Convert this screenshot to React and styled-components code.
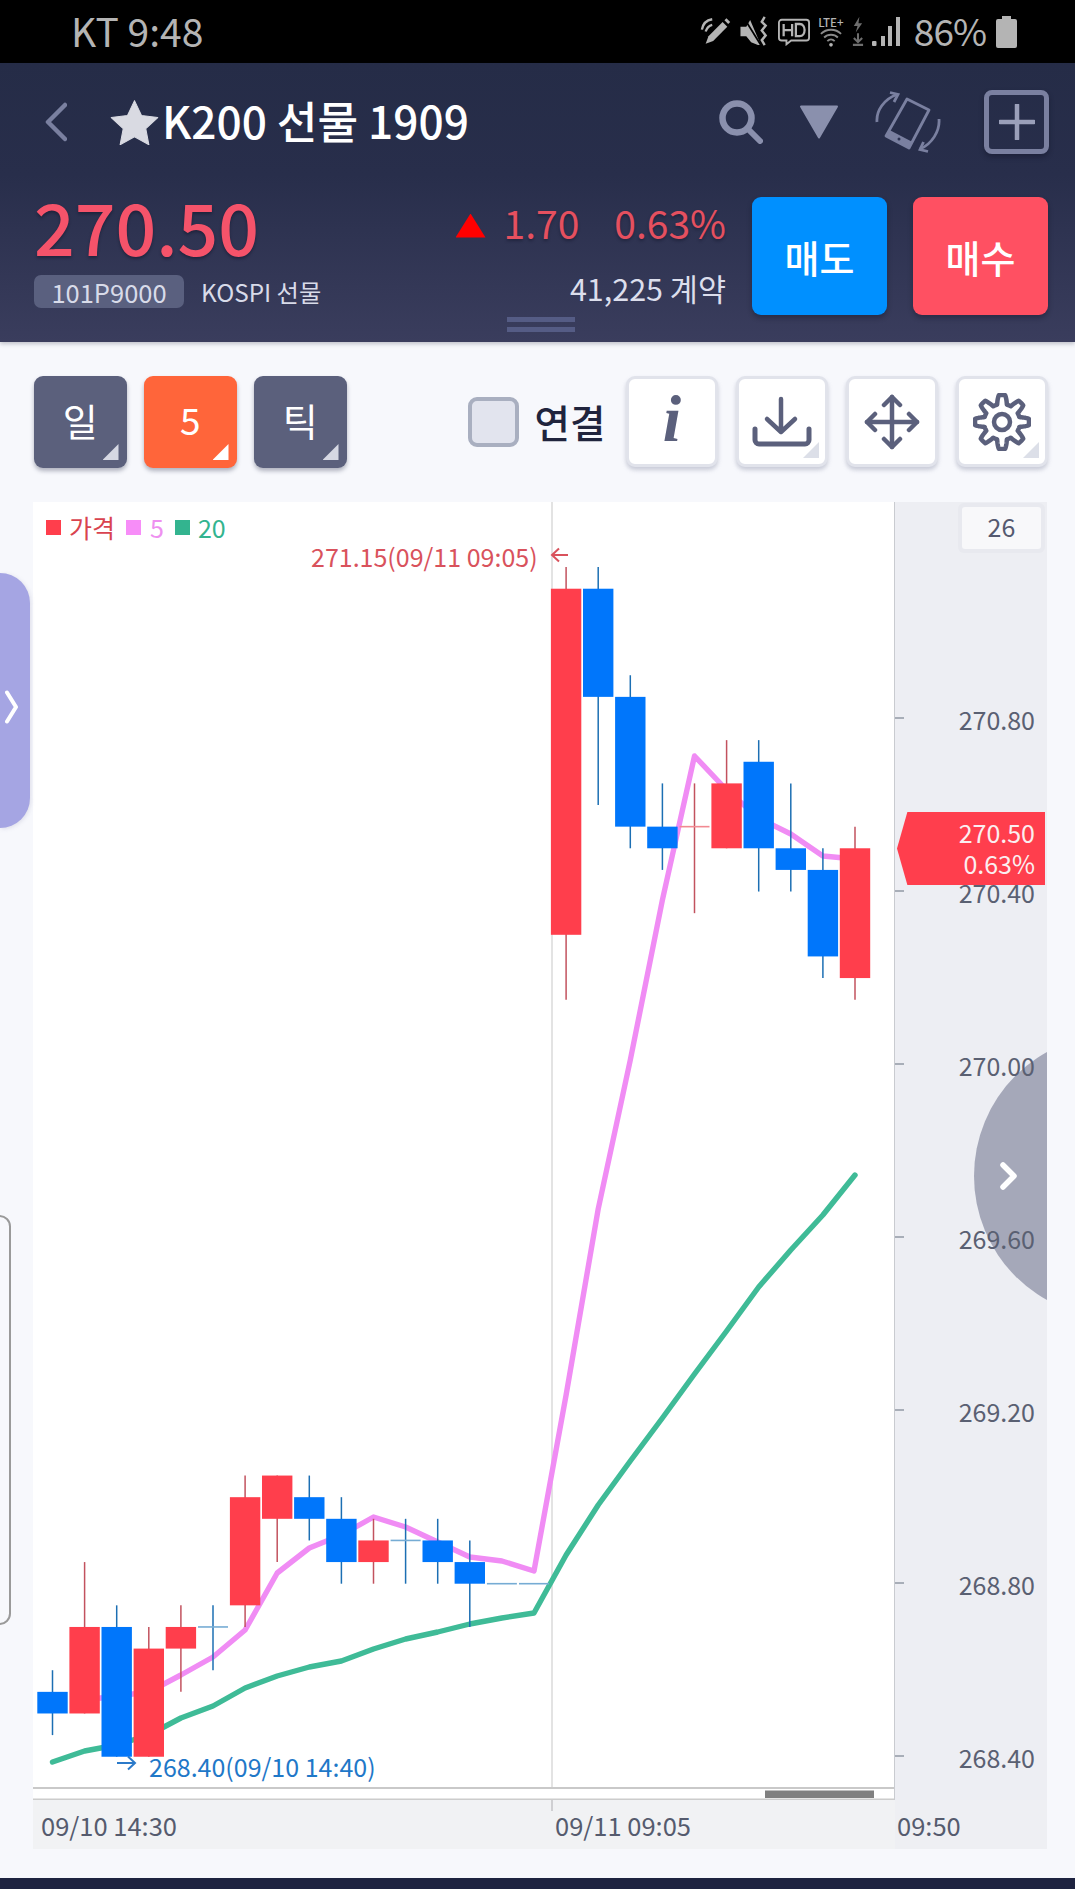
import React from 'react';
import styled, { createGlobalStyle } from 'styled-components';

const Global = createGlobalStyle`
  html, body { margin: 0; padding: 0; background: #f7f8fc; }
  body { font-family: "Noto Sans CJK KR", "Noto Sans", sans-serif; }
  * { box-sizing: border-box; }
`;

const Page = styled.div`
  position: relative;
  width: 1075px;
  height: 1889px;
  overflow: hidden;
  background: #f7f8fc;
  display: flex;
  flex-direction: column;
`;

/* status bar */
const StatusBar = styled.div`
  height: 63px;
  background: #000;
  color: #b4b4b4;
  display: flex;
  align-items: center;
  padding: 0 58px 0 71px;
  font-size: 39px;
  flex: none;
`;
const StatusTime = styled.span`
  line-height: 1;
  margin-top: -2px;
`;
const StatusIcons = styled.div`
  margin-left: auto;
  display: flex;
  align-items: center;
  gap: 8px;
`;
const Percent = styled.span`
  font-size: 37px;
  letter-spacing: -1px;
  line-height: 1;
  margin: -2px 2px 0 6px;
`;
const LteStack = styled.div`
  width: 26px;
  display: flex;
  flex-direction: column;
  align-items: center;
`;
const LteText = styled.span`
  font-size: 11.5px;
  line-height: 12px;
  font-weight: 500;
  color: #b4b4b4;
  white-space: nowrap;
`;

/* header */
const Header = styled.header`
  position: relative;
  flex: none;
  height: 279px;
  background: linear-gradient(180deg, #252c47 0%, #282e4b 40%, #3a3d5d 100%);
  box-shadow: 0 2px 4px rgba(30, 35, 60, 0.25);
  z-index: 2;
`;
const TitleRow = styled.div`
  height: 117px;
  display: flex;
  align-items: center;
  padding: 0 26px 0 45px;
`;
const Title = styled.h1`
  margin: -3px 0 0 3px;
  font-size: 44.2px;
  font-weight: 500;
  line-height: 1;
  color: #fff;
  white-space: nowrap;
`;
const StarMark = styled.svg`
  margin-left: 43px;
  flex: none;
`;
const TopActions = styled.div`
  margin-left: auto;
  display: flex;
  align-items: center;
  gap: 36px;
`;
const PlusBox = styled.div`
  width: 65px;
  height: 64px;
  margin-left: 7px;
  border: 5px solid #7a80a0;
  border-radius: 8px;
  display: flex;
  align-items: center;
  justify-content: center;
  box-shadow: 0 3px 5px rgba(15, 18, 35, 0.4);
`;
const PriceRow = styled.div`
  display: flex;
  padding: 17px 27px 0 34px;
  align-items: flex-start;
`;
const PriceColumn = styled.div`
  display: flex;
  flex-direction: column;
  align-items: flex-start;
`;
const BigPrice = styled.div`
  font-size: 71.5px;
  line-height: 73px;
  font-weight: 500;
  color: #f5536a;
  margin: -8px 0 0 0;
  text-shadow: 0 2px 3px rgba(10, 12, 30, 0.4);
`;
const CodeRow = styled.div`
  display: flex;
  align-items: center;
  gap: 17px;
  margin-top: 13px;
`;
const CodeBadge = styled.span`
  width: 150px;
  height: 33px;
  background: #5a607f;
  border-radius: 7px;
  color: #d8dbe9;
  font-size: 25.5px;
  line-height: 33px;
  text-align: center;
`;
const CodeName = styled.span`
  color: #d8dbe9;
  font-size: 24.3px;
  line-height: 33px;
`;
const ChangeColumn = styled.div`
  margin-left: auto;
  display: flex;
  flex-direction: column;
  align-items: flex-end;
`;
const ChangeLine = styled.div`
  display: flex;
  align-items: center;
  font-size: 39px;
  line-height: 50px;
  color: #e5505f;
  text-shadow: 0 2px 3px rgba(10, 12, 30, 0.35);
`;
const UpTriangle = styled.i`
  display: block;
  width: 30px;
  height: 24px;
  margin: 7px 18px 0 0;
  background: #f00;
  clip-path: polygon(50% 0, 100% 100%, 0 100%);
`;
const ChangeGap = styled.span`
  margin-left: 35px;
`;
const Volume = styled.div`
  color: #dcdeec;
  font-size: 30.5px;
  line-height: 40px;
  margin-top: 21px;
`;
const TradeButtons = styled.div`
  display: flex;
  gap: 26px;
  margin-left: 26px;
`;
const TradeButton = styled.button`
  width: 135px;
  height: 118px;
  border: 0;
  border-radius: 9px;
  background: ${(p) => (p.$sell ? '#0090ff' : '#ff5062')};
  color: #fff;
  font-family: inherit;
  font-size: 38px;
  font-weight: 500;
  padding: 0;
  box-shadow: 0 3px 5px rgba(15, 18, 35, 0.35);
`;
const Grip = styled.div`
  position: absolute;
  left: 507px;
  bottom: 10px;
  width: 68px;
  height: 15px;
  border-top: 5px solid #555c85;
  border-bottom: 5px solid #555c85;
`;

/* toolbar */
const Toolbar = styled.div`
  flex: none;
  height: 160px;
  display: flex;
  align-items: flex-start;
  padding: 34px 27px 0 34px;
`;
const IntervalGroup = styled.div`
  display: flex;
  gap: 17.5px;
`;
const Corner = styled.i`
  position: absolute;
  right: ${(p) => p.$inset}px;
  bottom: ${(p) => p.$inset}px;
  width: 16px;
  height: 16px;
  background: ${(p) => p.$color};
  clip-path: polygon(100% 0, 100% 100%, 0 100%);
`;
const IntervalButton = styled.div`
  position: relative;
  width: 92.5px;
  height: 92px;
  border-radius: 9px;
  background: ${(p) => (p.$active ? '#ff653a' : '#5b607c')};
  color: #fff;
  font-size: ${(p) => (p.$active ? 37 : 38)}px;
  line-height: 87px;
  text-align: center;
  box-shadow: 0 3px 4px rgba(70, 75, 100, 0.4);
`;
const LinkCheck = styled.div`
  display: flex;
  align-items: center;
  height: 92px;
  margin-left: 121px;
  gap: 16px;
`;
const CheckBox = styled.div`
  width: 51px;
  height: 50px;
  border: 4px solid #a9afc0;
  border-radius: 9px;
  background: #e2e4ee;
`;
const CheckLabel = styled.span`
  font-size: 38.5px;
  font-weight: 500;
  color: #20243d;
  margin-top: -3px;
`;
const ToolGroup = styled.div`
  margin-left: auto;
  display: flex;
  gap: 18px;
`;
const ToolButton = styled.div`
  position: relative;
  width: 92px;
  height: 91px;
  background: #fff;
  border: 3px solid #e1e3eb;
  border-radius: 9px;
  display: flex;
  align-items: center;
  justify-content: center;
  box-shadow: 0 3px 4px rgba(130, 135, 160, 0.4);
`;
const InfoGlyph = styled.span`
  font-family: "Liberation Serif", serif;
  font-style: italic;
  font-weight: 700;
  font-size: 66px;
  line-height: 1;
  color: #5b607c;
  margin-top: -6px;
`;

/* chart */
const ChartGrid = styled.div`
  flex: none;
  width: 1014px;
  margin-left: 33px;
  display: grid;
  grid-template-columns: 862px 152px;
  grid-template-rows: 1298px 49px;
`;
const Plot = styled.div`
  position: relative;
  background: #fff;
`;
const PlotSvg = styled.svg`
  display: block;
`;
const Legend = styled.div`
  position: absolute;
  left: 13px;
  top: 7px;
  display: flex;
  align-items: center;
  font-size: 25px;
  line-height: 36px;
`;
const LegendSwatch = styled.i`
  width: 15px;
  height: 15px;
  margin: 0 ${(p) => p.$gap}px 0 ${(p) => p.$lead}px;
  background: ${(p) => p.$color};
`;
const LegendText = styled.span`
  color: ${(p) => p.$color};
`;
const Extreme = styled.div`
  position: absolute;
  left: ${(p) => p.$left}px;
  top: ${(p) => p.$top}px;
  font-size: 25px;
  line-height: 30px;
  white-space: nowrap;
  color: ${(p) => p.$color};
`;
const RightAxis = styled.div`
  position: relative;
  background: #edeef3;
  overflow: hidden;
`;
const CountTag = styled.div`
  position: absolute;
  top: 1px;
  right: 2px;
  width: 87px;
  height: 50px;
  background: #e8e9ef;
  border-radius: 6px;
  padding: 4px;
`;
const CountValue = styled.div`
  height: 42px;
  background: #f8f8fa;
  border-radius: 3px;
  color: #555a70;
  font-size: 25px;
  line-height: 38px;
  text-align: center;
`;
const Circle = styled.div`
  position: absolute;
  left: 79px;
  top: 532px;
  width: 284px;
  height: 284px;
  border-radius: 50%;
  background: #a5a8b9;
`;
const CircleArrow = styled.svg`
  position: absolute;
  left: 26px;
  top: 128px;
`;
const Tick = styled.i`
  position: absolute;
  left: 0;
  width: 9px;
  height: 2px;
  background: #a8aeb8;
`;
const PriceLabel = styled.span`
  position: absolute;
  right: 12px;
  font-size: 25px;
  line-height: 30px;
  color: #5a6072;
`;
const PriceTag = styled.div`
  position: absolute;
  left: 2px;
  top: 310px;
  width: 148px;
  height: 73px;
  background: #ff3e4d;
  clip-path: polygon(0 50%, 7% 0, 100% 0, 100% 100%, 7% 100%);
  padding: 5px 10px 0 0;
  color: #fbeef0;
  font-size: 25px;
  line-height: 31px;
  text-align: right;
`;
const TimeAxis = styled.div`
  position: relative;
  background: #f1f2f4;
  display: flex;
  align-items: center;
  font-size: 25.5px;
  color: #555b6e;
  padding-left: 8px;
`;
const TimeLabel = styled.span`
  width: ${(p) => p.$width}px;
  margin-top: -1px;
`;
const TimeMark = styled.i`
  position: absolute;
  left: 518px;
  top: 0;
  width: 2px;
  height: 11px;
  background: #cfcfd2;
`;
const CornerTime = styled(RightAxis)`
  display: flex;
  align-items: center;
  font-size: 25.5px;
  color: #555b6e;
  padding-left: 2px;
  background: #eeeff3;
`;
const BottomBar = styled.div`
  position: absolute;
  left: 0;
  right: 0;
  bottom: 0;
  height: 11px;
  background: #1e2340;
`;

/* side overlays */
const SideTab = styled.div`
  position: absolute;
  left: 0;
  top: 573px;
  width: 30px;
  height: 255px;
  background: #a5a5e3;
  border-radius: 0 30px 30px 0;
  display: flex;
  align-items: center;
  justify-content: flex-start;
  padding: 12px 0 0 5px;
  box-shadow: 1px 1px 4px rgba(120, 120, 160, 0.2);
`;
const SideFrame = styled.div`
  position: absolute;
  left: -12px;
  top: 1215px;
  width: 23px;
  height: 410px;
  border: 2px solid #9a9a9a;
  border-radius: 12px;
`;

const yOf = (p) => 1583.7 + (268.8 - p) * 432.6;
const xOf = (i) => 52.5 + 32.1 * i;

const CANDLES = [
  ['b', 268.6, 268.55, 268.5, 268.45],
  ['r', 268.85, 268.7, 268.5, 268.5],
  ['b', 268.75, 268.7, 268.4, 268.4],
  ['r', 268.7, 268.65, 268.4, 268.4],
  ['r', 268.75, 268.7, 268.65, 268.55],
  ['b', 268.75, 268.7, 268.7, 268.6],
  ['r', 269.05, 269.0, 268.75, 268.7],
  ['r', 269.05, 269.05, 268.95, 268.85],
  ['b', 269.05, 269.0, 268.95, 268.9],
  ['b', 269.0, 268.95, 268.85, 268.8],
  ['r', 268.95, 268.9, 268.85, 268.8],
  ['b', 268.95, 268.9, 268.9, 268.8],
  ['b', 268.95, 268.9, 268.85, 268.8],
  ['b', 268.9, 268.85, 268.8, 268.7],
  ['b', 268.8, 268.8, 268.8, 268.8],
  ['b', 268.8, 268.8, 268.8, 268.8],
  ['r', 271.15, 271.1, 270.3, 270.15],
  ['b', 271.15, 271.1, 270.85, 270.6],
  ['b', 270.9, 270.85, 270.55, 270.5],
  ['b', 270.65, 270.55, 270.5, 270.45],
  ['r', 270.65, 270.55, 270.55, 270.35],
  ['r', 270.75, 270.65, 270.5, 270.5],
  ['b', 270.75, 270.7, 270.5, 270.4],
  ['b', 270.65, 270.5, 270.45, 270.4],
  ['b', 270.5, 270.45, 270.25, 270.2],
  ['r', 270.55, 270.5, 270.2, 270.15],
];

const MA5 = [
  [1, 1700], [2, 1696], [3, 1692], [4, 1675], [5, 1657], [6, 1630], [7, 1573], [8, 1548],
  [9, 1535], [10, 1517], [11, 1527], [12, 1542], [13, 1557], [14, 1561], [15, 1571],
  [16, 1395], [17, 1209], [18, 1060], [19, 900], [20, 756], [21, 790], [22, 818],
  [23, 834], [24, 856], [25, 859],
];
const MA20 = [
  [0, 1762], [1, 1751], [2, 1745], [3, 1735], [4, 1718], [5, 1706], [6, 1688], [7, 1676],
  [8, 1667], [9, 1661], [10, 1649], [11, 1639], [12, 1632], [13, 1624], [14, 1618], [15, 1613],
  [16, 1555], [17, 1505], [18, 1461], [19, 1418], [20, 1374], [21, 1331], [22, 1287],
  [23, 1250], [24, 1215], [25, 1175],
];
const linePoints = (rows) => rows.map(([i, y]) => `${xOf(i).toFixed(1)},${y}`).join(' ');

const PRICE_TICKS = ['270.80', '270.40', '270.00', '269.60', '269.20', '268.80', '268.40'];

const gearPath = (() => {
  const pts = [];
  for (let s = 0; s < 320; s += 1) {
    const t = (s / 320) * Math.PI * 2;
    const c = Math.max(-1, Math.min(1, 1.7 * Math.cos(8 * t + Math.PI * 4)));
    const r = 22.5 + 4.5 * c;
    pts.push(`${(29 + r * Math.sin(t)).toFixed(2)} ${(29 - r * Math.cos(t)).toFixed(2)}`);
  }
  return `M${pts.join('L')}Z`;
})();

function Candle({ data, index }) {
  const [kind, high, top, bottom, low] = data;
  const x = xOf(index);
  const wick = kind === 'r' ? '#c2525e' : '#1c6fb3';
  const body = kind === 'r' ? '#ff3e4c' : '#0076fb';
  const flat = top === bottom;
  return (
    <g>
      {high !== low && <line x1={x} x2={x} y1={yOf(high)} y2={yOf(low)} stroke={wick} strokeWidth="1.5" />}
      {flat ? (
        <line
          x1={x - 15}
          x2={x + 15}
          y1={yOf(top)}
          y2={yOf(top)}
          stroke={kind === 'r' ? '#f28a92' : '#76acd4'}
          strokeWidth="1.6"
        />
      ) : (
        <rect x={x - 15.2} y={yOf(top)} width="30.4" height={yOf(bottom) - yOf(top)} fill={body} />
      )}
    </g>
  );
}

function ChartDrawing() {
  return (
    <PlotSvg width="862" height="1298" viewBox="33 502 862 1298">
      <line x1="552" x2="552" y1="502" y2="1788" stroke="#dadada" strokeWidth="1.5" />
      <polyline points={linePoints(MA5)} fill="none" stroke="#f08cf4" strokeWidth="5.4" strokeLinejoin="round" />
      <polyline points={linePoints(MA20)} fill="none" stroke="#3fbb97" strokeWidth="5.4" strokeLinecap="round" strokeLinejoin="round" />
      {CANDLES.map((c, i) => (
        <Candle key={i} data={c} index={i} />
      ))}
      <path d="M568 555H552M559 548.500l-7 6.500 7 6.500" fill="none" stroke="#d9525c" strokeWidth="2" />
      <path d="M117 1763H135M128 1756.500l7 6.500-7 6.500" fill="none" stroke="#2b7ac9" strokeWidth="2" />
      <rect x="33" y="1787" width="862" height="2" fill="#c9c9c9" />
      <rect x="33" y="1798.500" width="862" height="2" fill="#cccccc" />
      <rect x="765" y="1790.500" width="109" height="7.500" fill="#808080" />
      <rect x="894" y="502" width="2" height="1298" fill="#c9cbd0" />
    </PlotSvg>
  );
}

export default function App() {
  return (
    <Page>
      <Global />
      <StatusBar>
        <StatusTime>KT 9:48</StatusTime>
        <StatusIcons>
          <svg width="32" height="31" viewBox="0 0 34 32" fill="none">
            <path d="M6 29l3-8L24 6l5 5-15 15z" fill="#b4b4b4" />
            <path d="M27 3l4 4" stroke="#b4b4b4" strokeWidth="3" />
            <path d="M2 14C3 8 7 4 13 3M6 16c1-3 3-6 7-7" stroke="#b4b4b4" strokeWidth="2.500" />
          </svg>
          <svg width="30" height="31" viewBox="0 0 30 32" fill="none">
            <path d="M0 11h6L10 4l11 26h-3L11 27 6 21H0z" fill="#b4b4b4" />
            <path d="M3 1l18 29" stroke="#000" strokeWidth="1.800" />
            <path d="M25 1l-3 5 4 4-4 5 4 5-4 5 3 5" stroke="#b4b4b4" strokeWidth="2.500" />
          </svg>
          <svg width="32" height="28" viewBox="0 0 34 29" fill="none">
            <path d="M4 1.500h26a3 3 0 0 1 3 3v16a3 3 0 0 1-3 3H14l-5 4v-4H4a3 3 0 0 1-3-3v-16a3 3 0 0 1 3-3z" stroke="#b4b4b4" strokeWidth="2" />
            <path d="M6 6v13M15 6v13M6 12.500h9M19 6v13h4c7 0 7-13 0-13z" stroke="#b4b4b4" strokeWidth="2.400" />
          </svg>
          <LteStack>
            <LteText>LTE+</LteText>
            <svg width="22" height="19" viewBox="0 0 24 20" fill="none">
              <path d="M1 6c6-6 16-6 22 0M4.500 10c4-4 11-4 15 0M8 14c2.500-2.500 5.500-2.500 8 0" stroke="#8a8a8a" strokeWidth="2" />
              <circle cx="12" cy="18" r="2" fill="#b4b4b4" />
            </svg>
          </LteStack>
          <svg width="12" height="31" viewBox="0 0 13 32" fill="none">
            <path d="M8 0L2 10h4L4 17l7-10H7z" fill="#6e6e6e" />
            <path d="M6.500 18v9M2 23l4.500 4.500L11 23M1 30.500h11" stroke="#6e6e6e" strokeWidth="2.200" />
          </svg>
          <svg width="28" height="30" viewBox="0 0 28 30" fill="#b4b4b4">
            <rect x="0" y="24" width="4.500" height="5" rx="1" />
            <rect x="9" y="19" width="4" height="10" />
            <rect x="16" y="9" width="4" height="20" />
            <rect x="24" y="0" width="4" height="29" />
          </svg>
          <Percent>86%</Percent>
          <svg width="21" height="32" viewBox="0 0 21 32" fill="#b4b4b4">
            <path d="M6 0h9v3h4a2 2 0 0 1 2 2v25a2 2 0 0 1-2 2H2a2 2 0 0 1-2-2V5a2 2 0 0 1 2-2h4z" />
          </svg>
        </StatusIcons>
      </StatusBar>

      <Header>
        <TitleRow>
          <svg width="22" height="40" viewBox="0 0 22 40" fill="none">
            <path d="M20 3L3 20l17 17" stroke="#7a80a0" strokeWidth="4.500" strokeLinecap="round" strokeLinejoin="round" />
          </svg>
          <StarMark width="49" height="46" viewBox="0 0 47 44">
            <path d="M23.500 1.500l6.700 14.300 15.600 1.900-11.500 10.700 3 15.400-13.800-7.600-13.800 7.600 3-15.400L1.200 17.700l15.600-1.900z" fill="#d9dae2" stroke="#d9dae2" strokeLinejoin="round" strokeWidth="1" />
          </StarMark>
          <Title>K200 선물 1909</Title>
          <TopActions>
            <svg width="44" height="44" viewBox="0 0 44 44" fill="none">
              <circle cx="18" cy="18" r="14.500" stroke="#8a90ad" strokeWidth="6.500" />
              <path d="M29 29l12 12" stroke="#8a90ad" strokeWidth="6" strokeLinecap="round" />
            </svg>
            <svg width="40" height="34" viewBox="0 0 40 34">
              <path d="M2 1.500h36L20 32.500z" fill="#8a90ad" stroke="#8a90ad" strokeWidth="2" strokeLinejoin="round" />
            </svg>
            <svg width="66" height="62" viewBox="0 0 66 62" fill="none">
              <path d="M32 8L54 19 34 57 11 45z" stroke="#7a80a0" strokeWidth="2.800" strokeLinejoin="round" />
              <path d="M14.500 39L37.500 51 34 57 11 45z" fill="#7a80a0" />
              <circle cx="24" cy="48" r="1.500" fill="#2b3150" />
              <path d="M2 31C1 20 9 8 22 3.500" stroke="#7a80a0" strokeWidth="2.800" />
              <path d="M15 1.500l8 2-4 7.500" stroke="#7a80a0" strokeWidth="2.800" />
              <path d="M64 28c1 12-7 25-19 30" stroke="#7a80a0" strokeWidth="2.800" />
              <path d="M53 60.500l-8-2 3.500-7.500" stroke="#7a80a0" strokeWidth="2.800" />
            </svg>
            <PlusBox>
              <svg width="36" height="36" viewBox="0 0 36 36" fill="none">
                <path d="M18 1v34M1 18h34" stroke="#9a9fb9" strokeWidth="4.500" strokeLinecap="round" />
              </svg>
            </PlusBox>
          </TopActions>
        </TitleRow>
        <PriceRow>
          <PriceColumn>
            <BigPrice>270.50</BigPrice>
            <CodeRow>
              <CodeBadge>101P9000</CodeBadge>
              <CodeName>KOSPI 선물</CodeName>
            </CodeRow>
          </PriceColumn>
          <ChangeColumn>
            <ChangeLine>
              <UpTriangle />
              <span>1.70</span>
              <ChangeGap>0.63%</ChangeGap>
            </ChangeLine>
            <Volume>41,225 계약</Volume>
          </ChangeColumn>
          <TradeButtons>
            <TradeButton $sell>매도</TradeButton>
            <TradeButton>매수</TradeButton>
          </TradeButtons>
        </PriceRow>
        <Grip />
      </Header>

      <Toolbar>
        <IntervalGroup>
          <IntervalButton>일<Corner $inset={8} $color="#d6d8e3" /></IntervalButton>
          <IntervalButton $active>5<Corner $inset={8} $color="#fff" /></IntervalButton>
          <IntervalButton>틱<Corner $inset={8} $color="#d6d8e3" /></IntervalButton>
        </IntervalGroup>
        <LinkCheck>
          <CheckBox />
          <CheckLabel>연결</CheckLabel>
        </LinkCheck>
        <ToolGroup>
          <ToolButton><InfoGlyph>i</InfoGlyph></ToolButton>
          <ToolButton>
            <svg width="62" height="54" viewBox="0 0 62 54" fill="none">
              <path d="M30 4v32M16 24l14 13 14-13" stroke="#5b607c" strokeWidth="4.500" strokeLinecap="round" strokeLinejoin="round" />
              <path d="M4 34v11a4 4 0 0 0 4 4h46a4 4 0 0 0 4-4V34" stroke="#5b607c" strokeWidth="5" strokeLinecap="round" />
            </svg>
            <Corner $inset={6} $color="#dcdfe8" />
          </ToolButton>
          <ToolButton>
            <svg width="56" height="56" viewBox="0 0 56 56" fill="none" stroke="#5b607c" strokeWidth="4.500" strokeLinecap="round" strokeLinejoin="round">
              <path d="M28 3v50M3 28h50" />
              <path d="M20 11l8-8 8 8M20 45l8 8 8-8M11 20l-8 8 8 8M45 20l8 8-8 8" />
            </svg>
          </ToolButton>
          <ToolButton>
            <svg width="58" height="58" viewBox="0 0 58 58" fill="none" stroke="#5b607c" strokeWidth="4.500">
              <path d={gearPath} strokeLinejoin="round" />
              <circle cx="29" cy="29" r="8" />
            </svg>
            <Corner $inset={6} $color="#dcdfe8" />
          </ToolButton>
        </ToolGroup>
      </Toolbar>

      <ChartGrid>
        <Plot>
          <ChartDrawing />
          <Legend>
            <LegendSwatch $color="#ff3e4c" $gap={8} $lead={0} />
            <LegendText $color="#d9434f">가격</LegendText>
            <LegendSwatch $color="#f78df8" $gap={9} $lead={11} />
            <LegendText $color="#ee90f0">5</LegendText>
            <LegendSwatch $color="#33b48f" $gap={8} $lead={11} />
            <LegendText $color="#33b48f">20</LegendText>
          </Legend>
          <Extreme $left={278} $top={39} $color="#d9525c">271.15(09/11 09:05)</Extreme>
          <Extreme $left={116} $top={1249} $color="#1f78c8">268.40(09/10 14:40)</Extreme>
        </Plot>
        <RightAxis>
          <Circle>
            <CircleArrow width="18" height="28" viewBox="0 0 18 28" fill="none">
              <path d="M3 3l11 11L3 25" stroke="#fff" strokeWidth="5.500" strokeLinecap="round" strokeLinejoin="round" />
            </CircleArrow>
          </Circle>
          <CountTag><CountValue>26</CountValue></CountTag>
          {PRICE_TICKS.map((label) => {
            const y = yOf(parseFloat(label)) - 502 - 1;
            return (
              <React.Fragment key={label}>
                <Tick style={{ top: y - 1 }} />
                <PriceLabel style={{ top: y - 14 }}>{label}</PriceLabel>
              </React.Fragment>
            );
          })}
          <PriceTag>270.50<br />0.63%</PriceTag>
        </RightAxis>
        <TimeAxis>
          <TimeMark />
          <TimeLabel $width={514}>09/10 14:30</TimeLabel>
          <TimeLabel $width={200}>09/11 09:05</TimeLabel>
        </TimeAxis>
        <CornerTime><TimeLabel $width={80}>09:50</TimeLabel></CornerTime>
      </ChartGrid>

      <SideTab>
        <svg width="13" height="34" viewBox="0 0 13 34" fill="none">
          <path d="M2 2.500l9 14.500-9 14.500" stroke="#fff" strokeWidth="4" strokeLinecap="round" strokeLinejoin="round" />
        </svg>
      </SideTab>
      <SideFrame />
      <BottomBar />
    </Page>
  );
}
